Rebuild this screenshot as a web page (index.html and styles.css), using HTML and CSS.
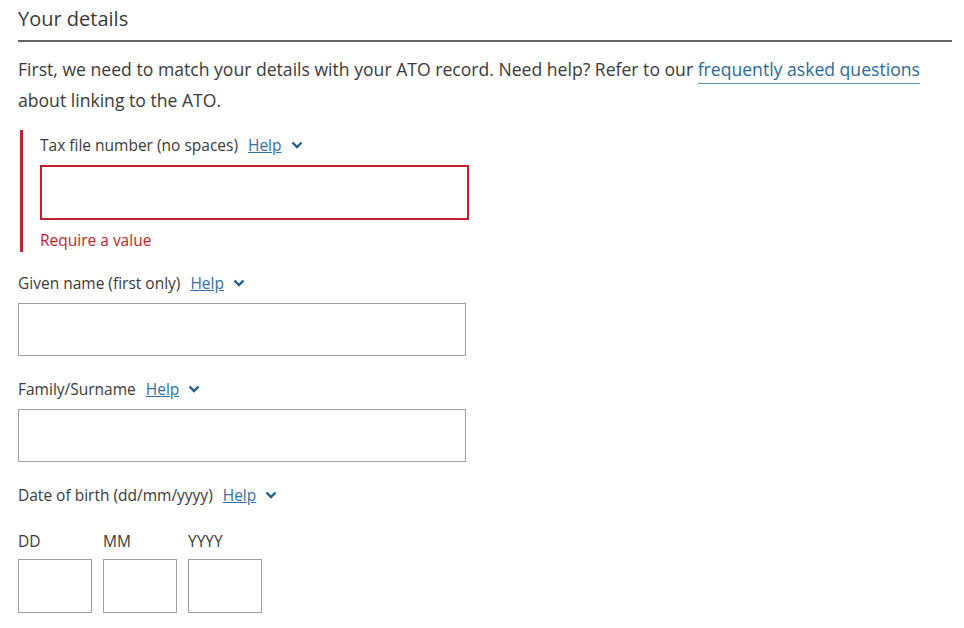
FILE: index.html
```html
<html>
<head>
  <link rel="stylesheet" href="styles.css">
</head>
<body>
  <div class="page">
    <h2 class="title">Your details</h2>
    <p class="intro">First, we need to match your details with your ATO record. Need help? Refer to our <a href="#" class="faq">frequently asked questions</a> about linking to the ATO.</p>

    <div class="field field-error">
      <div class="label">Tax file number (no spaces) <a href="#" class="help">Help</a>
        <svg class="chev" width="12" height="8" viewBox="0 0 12 8"><path d="M1.5 1.5 L6 6 L10.5 1.5" fill="none" stroke="#1f5f8b" stroke-width="2.4"/></svg>
      </div>
      <input class="text-input" type="text">
      <div class="error-msg">Require a value</div>
    </div>

    <div class="field">
      <div class="label">Given name (first only) <a href="#" class="help">Help</a>
        <svg class="chev" width="12" height="8" viewBox="0 0 12 8"><path d="M1.5 1.5 L6 6 L10.5 1.5" fill="none" stroke="#1f5f8b" stroke-width="2.4"/></svg>
      </div>
      <input class="text-input" type="text">
    </div>

    <div class="field">
      <div class="label">Family/Surname <a href="#" class="help">Help</a>
        <svg class="chev" width="12" height="8" viewBox="0 0 12 8"><path d="M1.5 1.5 L6 6 L10.5 1.5" fill="none" stroke="#1f5f8b" stroke-width="2.4"/></svg>
      </div>
      <input class="text-input" type="text">
    </div>

    <div class="field">
      <div class="label">Date of birth (dd/mm/yyyy) <a href="#" class="help">Help</a>
        <svg class="chev" width="12" height="8" viewBox="0 0 12 8"><path d="M1.5 1.5 L6 6 L10.5 1.5" fill="none" stroke="#1f5f8b" stroke-width="2.4"/></svg>
      </div>
      <div class="dob">
        <div class="dob-part">
          <div class="dob-label">DD</div>
          <input class="small-input" type="text">
        </div>
        <div class="dob-part">
          <div class="dob-label">MM</div>
          <input class="small-input" type="text">
        </div>
        <div class="dob-part">
          <div class="dob-label">YYYY</div>
          <input class="small-input" type="text">
        </div>
      </div>
    </div>
  </div>
</body>
</html>
```

FILE: styles.css
```css
body {
  margin: 0;
  font-family: 'Open Sans', sans-serif;
  color: #3a3a3a;
  background: #ffffff;
}

.page {
  padding: 0 12px 0 18px;
}

.title {
  font-size: 20px;
  font-weight: normal;
  margin: 0;
  padding: 5px 0 8px;
  border-bottom: 2px solid #666666;
}

.intro {
  font-size: 17.6px;
  line-height: 31px;
  margin: 12px 0 14px;
}

.faq {
  color: #2a6a9a;
  text-decoration: none;
  border-bottom: 1px solid #5b92bd;
  padding-bottom: 2px;
}

.field {
  margin-bottom: 21px;
}

.field-error {
  border-left: 3px solid #c3202e;
  margin-left: 2px;
  padding-left: 17px;
  padding-top: 3px;
  margin-bottom: 19px;
}

.label {
  font-size: 15.5px;
  display: flex;
  align-items: center;
  height: 24px;
  margin-bottom: 8px;
}

.help {
  color: #3271a3;
  margin-left: 10px;
}

.chev {
  margin-left: 9px;
}

.text-input {
  display: block;
  width: 448px;
  height: 53px;
  box-sizing: border-box;
  border: 1px solid #a0a0a0;
  margin: 0;
}

.field-error .text-input {
  width: 429px;
  height: 55px;
  border: 2px solid #c3202e;
}

.error-msg {
  color: #c3202e;
  font-size: 15.5px;
  margin-top: 8px;
  line-height: 24px;
}

.dob {
  display: flex;
  gap: 11px;
  margin-top: 22px;
}

.dob-label {
  font-size: 15.5px;
  line-height: 24px;
  margin-bottom: 6px;
}

.small-input {
  display: block;
  width: 74px;
  height: 54px;
  box-sizing: border-box;
  border: 1px solid #a0a0a0;
  margin: 0;
}
```
